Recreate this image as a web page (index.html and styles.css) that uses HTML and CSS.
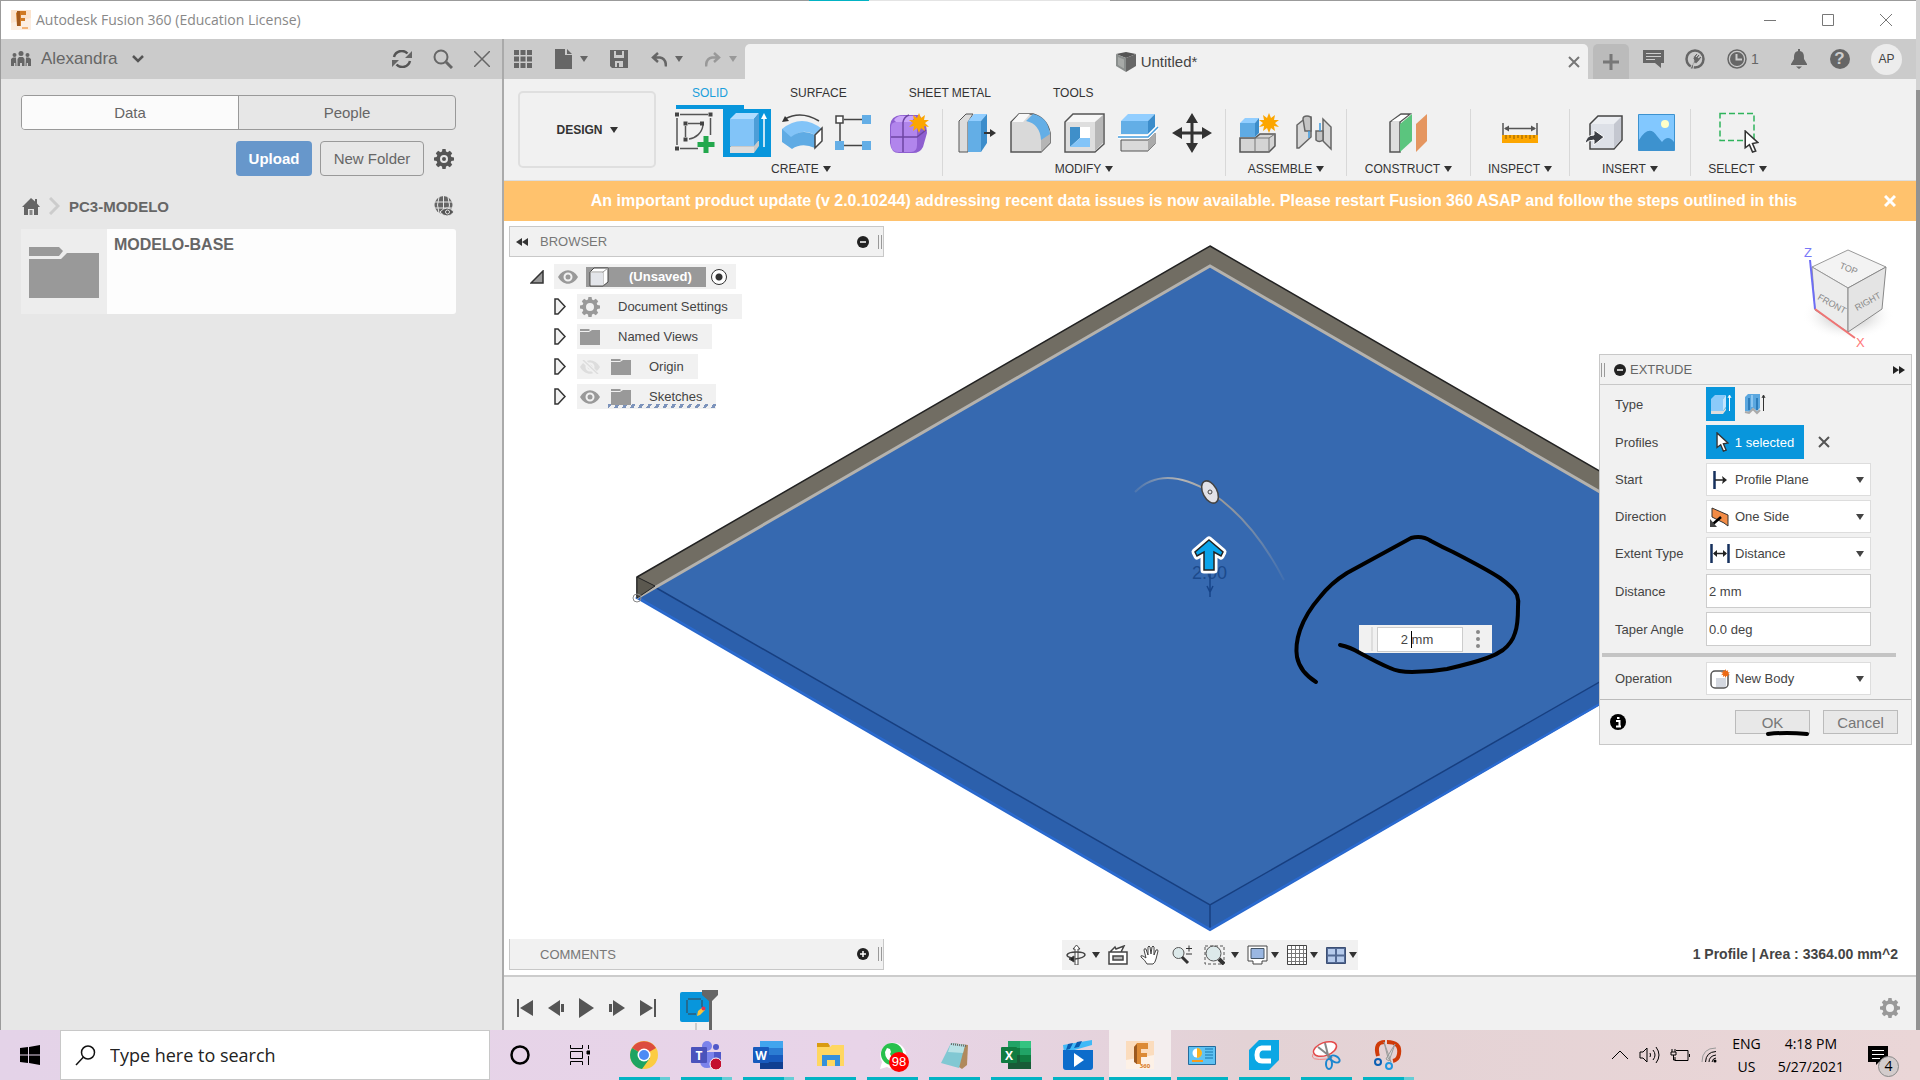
FILE: index.html
```html
<!DOCTYPE html>
<html lang="en">
<head>
    <meta charset="UTF-8">
    <meta name="viewport" content="width=device-width, initial-scale=1.0">
    <title>Autodesk Fusion 360 (Education License)</title>
    <link rel="stylesheet" href="styles.css">
</head>
<body>
    <!-- Shared icons -->
    <svg class="sprite" aria-hidden="true">
        <symbol id="caret" viewBox="0 0 8 6"><path d="M0 0h8L4 6z"/></symbol>
        <symbol id="gear" viewBox="0 0 20 20">
            <path fill-rule="evenodd" d="M8.4 0h3.2l.4 2.6 1.6.7L15.800 1.800l2.400 2.400-1.500 2.200.7 1.600 2.600.4v3.200l-2.600.4-.7 1.600 1.500 2.200-2.400 2.400-2.200-1.500-1.600.7-.4 2.600H8.400l-.4-2.600-1.600-.7-2.200 1.500-2.400-2.400 1.500-2.200-.7-1.600L0 11.600V8.400L2.600 8l.7-1.600-1.500-2.200 2.400-2.400 2.200 1.500L8 2.600zM10 6a4 4 0 1 0 0 8 4 4 0 0 0 0-8z"/>
        </symbol>
        <symbol id="folder" viewBox="0 0 20 16"><path d="M0 0h9l1 1-1 1H0zM0 3h9l3-2h8v15H0z"/></symbol>
        <symbol id="eye" viewBox="0 0 20 14">
            <path fill-rule="evenodd" d="M0 7C5-2 15-2 20 7 15 16 5 16 0 7zM10 2.500a4.500 4.500 0 1 0 0 9 4.500 4.500 0 0 0 0-9z"/><circle cx="10" cy="7" r="2.500"/>
        </symbol>
        <symbol id="expand" viewBox="0 0 12 17"><path d="M1 1h3l7 7.500-7 7.500H1z" fill="#f1f1f1" stroke="#333" stroke-width="1.500"/></symbol>
        <symbol id="pointer" viewBox="0 0 14 22"><path d="M1 1v16l4-3 3 7 3-1-3-7 5-1z" fill="#fff" stroke="#333" stroke-width="1.500"/></symbol>
        <symbol id="star" viewBox="0 0 20 20"><path d="M10 0l2 5 4-3-1 5 5 0-4 3 4 4-5-1 1 5-4-3-2 5-2-5-4 3 1-5-5 1 4-4-4-3 5 0-1-5 4 3z"/></symbol>
    </svg>

    <div class="window">
        <header class="titlebar">
            <svg class="logo" viewBox="0 0 20 20"><rect width="20" height="20" fill="#fbe3cd"/><path d="M0 13l20-5v12H0z" fill="#fceee2"/><path d="M5 3l2-2h8v4h-5v3h4v3h-4v5H6z" fill="#d07a24"/><path d="M6 1h3v15H6z" fill="#a2591c"/><path d="M11 17h6v2h-6z" fill="#f3b478"/></svg>
            <span>Autodesk Fusion 360 (Education License)</span>
            <div class="window-buttons">
                <button aria-label="Minimize"><svg viewBox="0 0 12 12"><path d="M0 6.500h12"/></svg></button>
                <button aria-label="Maximize"><svg viewBox="0 0 12 12"><path d="M.5.5h11v11H.5z"/></svg></button>
                <button aria-label="Close"><svg viewBox="0 0 12 12"><path d="M0 0l12 12M12 0L0 12"/></svg></button>
            </div>
        </header>

        <div class="workspace">
            <!-- Data panel -->
            <aside class="data-panel">
                <div class="data-header">
                    <button class="team">
                        <svg width="20" height="16" viewBox="0 0 20 16"><circle cx="10" cy="2.500" r="2.500"/><circle cx="3.500" cy="4" r="2"/><circle cx="16.500" cy="4" r="2"/><path d="M6.500 15V8l1.500-2h4l1.500 2v7h-2.500v-3H9v3zM0 15V8l2-1.500h3L5.500 15H4.400v-3H3v3zM20 15V8l-2-1.500h-3l-.5 8.500h1.100v-3H17v3z"/></svg>
                        Alexandra
                        <svg width="12" height="8" viewBox="0 0 12 8"><path d="M1 1l5 5 5-5" fill="none" stroke="#555" stroke-width="2.500"/></svg>
                    </button>
                    <button aria-label="Refresh"><svg width="20" height="18" viewBox="0 0 20 18"><path d="M2 7a8 8 0 0 1 13.500-3.500M18 11a8 8 0 0 1-13.500 3.500" fill="none" stroke="#555" stroke-width="2.500"/><path d="M20 1v7h-7zM0 17v-7h7z"/></svg></button>
                    <button aria-label="Search"><svg width="20" height="20" viewBox="0 0 20 20" fill="none" stroke="#666"><circle cx="8" cy="8" r="6.500" stroke-width="2"/><path d="M13 13l6 6" stroke-width="3"/></svg></button>
                    <button aria-label="Close panel"><svg width="16" height="16" viewBox="0 0 16 16"><path d="M0 0l16 16M16 0L0 16" stroke="#666" stroke-width="1.500"/></svg></button>
                </div>
                <div class="data-body">
                    <div class="segments">
                        <button class="active">Data</button>
                        <button>People</button>
                    </div>
                    <div class="data-actions">
                        <button class="upload">Upload</button>
                        <button class="new-folder">New Folder</button>
                        <button aria-label="Settings"><svg width="20" height="20" fill="#555"><use href="#gear"/><circle cx="10" cy="10" r="2"/></svg></button>
                    </div>
                    <nav class="crumbs">
                        <a href="#" aria-label="Home"><svg width="18" height="17" viewBox="0 0 18 17"><path d="M9 0l4 3.500V1h2v4.500l3 3.500h-2v8h-4v-6H6v6H2V9H0z"/><path d="M7.500 12h3v5h-3z" fill="#888"/></svg></a>
                        <svg width="11" height="18" viewBox="0 0 11 18"><path d="M1 1l8 8-8 8" fill="none" stroke="#ccc" stroke-width="3"/></svg>
                        <a href="#">PC3-MODELO</a>
                        <button aria-label="Public link"><svg width="20" height="20" viewBox="0 0 20 20"><circle cx="9.500" cy="9" r="9"/><path d="M9.500 0v18M0 6h19M0 12h19M5 1Q2 9 5 17M14 1q3 8 0 16" fill="none" stroke="#e7e7e7"/><path d="M6 16Q13 8 20 16 13 24 6 16z" fill="#555" stroke="#e7e7e7"/><circle cx="13.500" cy="16" r="2" fill="none" stroke="#e7e7e7"/></svg></button>
                    </nav>
                    <a class="folder-card" href="#">
                        <span class="thumb"><svg width="70" height="52" viewBox="0 0 70 52"><path d="M0 1h30l4 4-4 5H0zM0 13h32l6-6h32v45H0z"/></svg></span>
                        <span class="name">MODELO-BASE</span>
                    </a>
                </div>
            </aside>

            <main class="editor">
                <div class="appbar">
                    <div class="quick">
                        <button aria-label="Show data panel"><svg width="18" height="18" viewBox="0 0 18 18"><path d="M0 0h5v5H0zM6.500 0h5v5h-5zM13 0h5v5h-5zM0 6.500h5v5H0zM6.500 6.500h5v5h-5zM13 6.500h5v5h-5zM0 13h5v5H0zM6.500 13h5v5h-5zM13 13h5v5h-5z"/></svg></button>
                        <button aria-label="File"><svg width="17" height="20" viewBox="0 0 17 20"><path d="M0 0h10v6h7v14H0zM12 0l5 5h-5z"/></svg><svg class="caret"><use href="#caret"/></svg></button>
                        <button aria-label="Save"><svg width="18" height="18" viewBox="0 0 18 18"><path fill-rule="evenodd" d="M0 0h18v18H2l-2-2zM4 1v7h10V1h-2v4H6V1zM5 11v6h2v-4h2v4h4v-6z"/></svg></button>
                        <button aria-label="Undo"><svg width="16" height="15" viewBox="0 0 16 15"><path d="M7 1L2 5.500 7 10M2 5.500h7q6 1 6 9" fill="none" stroke="#666" stroke-width="2.500"/></svg><svg class="caret"><use href="#caret"/></svg></button>
                        <button class="muted" aria-label="Redo"><svg width="16" height="15" viewBox="0 0 16 15"><path d="M9 1l5 4.500L9 10M14 5.500H7q-6 1-6 9" fill="none" stroke="#999" stroke-width="2.500"/></svg><svg class="caret"><use href="#caret"/></svg></button>
                    </div>
                    <div class="doc-tab">
                        <span class="doc-title">
                            <svg width="20" height="20" viewBox="0 0 20 20"><path d="M0 2l10-2 10 2-10 4z" fill="#555"/><path d="M0 2l10 4v14L0 14z" fill="#8b8f8e"/><path d="M2 5l6 2.500v9L2 13z" fill="#a7aaa8"/><path d="M20 2L10 6v14l10-6z" fill="#666"/></svg>
                            Untitled*
                        </span>
                        <button aria-label="Close tab"><svg width="12" height="12" viewBox="0 0 12 12"><path d="M1 1l10 10M11 1L1 11" stroke="#777" stroke-width="2"/></svg></button>
                    </div>
                    <button class="new-tab" aria-label="New tab"><svg width="16" height="16" viewBox="0 0 16 16"><path d="M8 0v16M0 8h16" stroke="#777" stroke-width="3"/></svg></button>
                    <div class="account">
                        <button aria-label="Comments"><svg width="21" height="18" viewBox="0 0 21 18"><path d="M0 0h21v13h-3v5l-6-5H0z"/><path d="M3 3.500h15M3 6.500h15M3 9.500h9" stroke="#ccc"/></svg></button>
                        <button aria-label="Extensions"><svg width="20" height="20" viewBox="0 0 20 20"><circle cx="10" cy="10" r="8.500" fill="none" stroke="#666" stroke-width="2.500"/><path d="M5 20l4-8q-2-3 0-5l3-3 1 1-2 3 3-3 1 1-2 3 3-2 1 1-3 4q-3 4-5 2l-1 6z" stroke="#cbcbcb" stroke-width="1"/></svg></button>
                        <button class="jobs"><svg width="20" height="20" viewBox="0 0 20 20"><circle cx="10" cy="10" r="9" fill="none" stroke="#666" stroke-width="1.500"/><circle cx="10" cy="10" r="7"/><path d="M9.500 5v5.500H15" fill="none" stroke="#ccc" stroke-width="2"/></svg>1</button>
                        <button aria-label="Notifications"><svg width="18" height="20" viewBox="0 0 18 20"><path d="M8 0h2v2c4 1 4 4 4 8l3 5v1H1v-1l3-5c0-4 0-7 4-8zM6 17.500h6L9 20z"/></svg></button>
                        <button class="help" aria-label="Help">?</button>
                        <button class="avatar">AP</button>
                    </div>
                </div>

                <div class="ribbon">
                    <button class="workspace-switch">DESIGN <svg class="caret"><use href="#caret"/></svg></button>
                    <div class="ribbon-main">
                        <nav class="ribbon-tabs">
                            <a class="active" href="#">SOLID</a>
                            <a href="#">SURFACE</a>
                            <a href="#">SHEET METAL</a>
                            <a href="#">TOOLS</a>
                        </nav>
                        <div class="ribbon-groups">
                            <section>
                                <div class="tools">
                                    <button aria-label="Create Sketch"><svg viewBox="0 0 48 48"><path d="M11 5.500h28M8 9v27M41.500 9v17M11 39.500h18M19 14.500h12M16.500 17v11M34 16c-1 8-7 13-14 14" fill="none" stroke="#555" stroke-width="1.500"/><path d="M6 3.500h4v4H6zM39.500 3.500h4v4h-4zM6 37.500h4v4H6zM14.500 12.500h4v4h-4zM31 12.500h4v4h-4zM14.500 28.500h4v4h-4z" fill="#444"/><path d="M34.500 27h5v6h6v5h-6v6h-5v-6h-6v-5h6z" fill="#23a84d"/></svg></button>
                                    <button class="active" aria-label="Extrude"><svg viewBox="0 0 48 48"><path d="M7 38l6-6h23v5l-5 7H7z" fill="#c9c9c9"/><path d="M7 38h24v6H7z" fill="#dedede"/><path d="M7 10l6-6h23l-5 6z" fill="#b0dcff"/><path d="M7 10h24v27H7z" fill="#82c4f8"/><path d="M31 10l5-6v27l-5 6z" fill="#4d9ed8"/><path d="M41 38V9" stroke="#fff" stroke-width="1.500"/><path d="M38 10l3-6 3 6z" fill="#fff"/></svg></button>
                                    <button aria-label="Revolve"><svg viewBox="0 0 48 48"><path d="M5 20Q25 4 45 20l-7 6Q25 18 14 29l-9-5z" fill="#82c4f8"/><path d="M5 20l9 8Q25 19 38 26v13q-13-6-23 1L5 33z" fill="#5fabe4"/><path d="M38 26l7-7v13l-7 7z" fill="#fff" stroke="#444" stroke-width="1.500"/><path d="M8 10Q24 1 42 12" fill="none" stroke="#444" stroke-width="1.500"/><path d="M5 13l3-6 4 5z" fill="#333"/></svg></button>
                                    <button aria-label="Rectangular Pattern"><svg viewBox="0 0 48 48"><path d="M13 10.500h18M9 14v18M13 36.500h18" stroke="#444" stroke-width="1.500"/><path d="M5 7h7v7H5z" fill="#fff" stroke="#444" stroke-width="1.500"/><path d="M31 6h9v9h-9zM4 32h9v9H4zM31 32h9v9h-9z" fill="#64aee6"/></svg></button>
                                    <button aria-label="Create Form"><svg viewBox="0 0 48 48"><path d="M5 16Q6 7 16 6h18q8 8 8 18l-4 14q-3 6-10 6H14q-8 0-9-10z" fill="#8e5fd0"/><path d="M6 18Q6 13 12 13h15q5 0 5 6v17q0 7-6 7H13q-7 0-7-8z" fill="#b185ec"/><path d="M9 11q4-5 10-4h12l-5 6H11z" fill="#cba6f9"/><path d="M6 28h26l9-7M18 13v30M18 13q1-5 6-7" fill="none" stroke="#6d45a3" stroke-width="1.500"/><use href="#star" x="24" y="4" width="20" height="20" fill="#fca600"/></svg></button>
                                </div>
                                <button class="menu">CREATE <svg class="caret"><use href="#caret"/></svg></button>
                            </section>
                            <section>
                                <div class="tools">
                                    <button aria-label="Press Pull"><svg viewBox="0 0 48 48"><path d="M7 12l7-7h7l-5 8v30H7z" fill="#dcdcdc" stroke="#555"/><path d="M16 12l6-7h13l-6 7z" fill="#92ceff"/><path d="M16 12h13v31H16z" fill="#63aee6"/><path d="M29 12l6-7v29l-6 9z" fill="#3c8dcb"/><path d="M32 24h8" stroke="#333" stroke-width="2"/><path d="M38 20l6 4-6 4z" fill="#333"/></svg></button>
                                    <button aria-label="Fillet"><svg viewBox="0 0 48 48"><path d="M5 43V13l8-8h14q14 4 17 19v10l-9 9z" fill="#d9d9d9" stroke="#555" stroke-width="1.500"/><path d="M13 5h11l-7 8H6z" fill="#f8f8f8"/><path d="M35 29l9-8v13l-9 9z" fill="#b5b5b5"/><path d="M20 12l7-7q15 3 17 20l-9 6q-1-16-15-19z" fill="#63aee6"/></svg></button>
                                    <button aria-label="Shell"><svg viewBox="0 0 48 48"><path d="M5 13l8-8h31v30l-9 8H5z" fill="#f7f7f7" stroke="#555" stroke-width="1.500"/><path d="M6 13h29v29H6z" fill="#dedede"/><path d="M35 13l8-7v28l-8 8z" fill="#b7b7b7"/><path d="M10 18h20v20H10z" fill="#fff"/><path d="M10 18h10v11L10 38z" fill="#3f8fc9"/><path d="M20 29h10v9H10z" fill="#82c4f8"/></svg></button>
                                    <button aria-label="Split Body"><svg viewBox="0 0 48 48"><path d="M7 12l7-7h27l-7 7z" fill="#92ceff"/><path d="M7 12h27v13H7z" fill="#63aee6"/><path d="M34 12l7-7v13l-7 7z" fill="#3c8dcb"/><path d="M7 31h27l7-7v11l-7 7H7z" fill="#d9d9d9" stroke="#555"/><path d="M34 31l7-7v11l-7 7z" fill="#aaa"/><path d="M4 28h30l10-10" fill="none" stroke="#fff" stroke-width="4"/><path d="M4 28h30l10-10" fill="none" stroke="#479ddd" stroke-width="1.500"/></svg></button>
                                    <button aria-label="Move/Copy"><svg viewBox="0 0 48 48"><path d="M24 12v24M12 24h24" stroke="#333" stroke-width="3"/><path d="M24 4l6 10H18zM24 44l6-10H18zM4 24l10-6v12zM44 24l-10-6v12z" fill="#333"/></svg></button>
                                </div>
                                <button class="menu">MODIFY <svg class="caret"><use href="#caret"/></svg></button>
                            </section>
                            <section>
                                <div class="tools">
                                    <button aria-label="New Component"><svg viewBox="0 0 48 48"><path d="M5 29h15l5-4h15v12l-6 6H5z" fill="#d4d4d4" stroke="#555" stroke-width="1.500"/><path d="M20 29h14l6-4M20 29v14M34 29v14" fill="none" stroke="#777"/><path d="M5 14l5-5h14l-4 5z" fill="#92ceff"/><path d="M5 14h15v14H5z" fill="#5fabe4"/><path d="M20 14l4-5v15l-4 4z" fill="#3c8dcb"/><use href="#star" x="24" y="4" width="20" height="20" fill="#fca600"/></svg></button>
                                    <button aria-label="Joint"><svg viewBox="0 0 48 48" stroke="#666" stroke-width="1.500"><path d="M8 16l10-8h4v20L10 39H8z" fill="#d7d7d7"/><path d="M14 10q0-3 4-3t4 3v12h-6z" fill="#c4c4c4"/><path d="M42 40V18l-8-8v22z" fill="#d7d7d7"/><path d="M27 22h7v9q-4 3-7 0z" fill="#c4c4c4"/><path d="M20 22v7M31 14v8" stroke="#3e9be0"/></svg></button>
                                </div>
                                <button class="menu">ASSEMBLE <svg class="caret"><use href="#caret"/></svg></button>
                            </section>
                            <section class="wide">
                                <div class="tools">
                                    <button aria-label="Offset Plane"><svg viewBox="0 0 48 48"><path d="M5 13l11-8h9L15 13v30H5z" fill="#dedede" stroke="#555" stroke-width="1.500"/><path d="M7 12l9-6h7l-8 6z" fill="#fff"/><path d="M15 15l12-10v27L15 43z" fill="#5bc57e"/><path d="M31 15L42 5v27L31 43z" fill="#e59660"/></svg></button>
                                </div>
                                <button class="menu">CONSTRUCT <svg class="caret"><use href="#caret"/></svg></button>
                            </section>
                            <section class="middle">
                                <div class="tools">
                                    <button aria-label="Measure"><svg viewBox="0 0 48 48"><path d="M7 14v12M41 14v12M9 19.500h30" stroke="#555" stroke-width="1.500"/><path d="M8 19.500l5-3v6zM40 19.500l-5-3v6z" fill="#555"/><path d="M6 26h36v8H6z" fill="#fca600"/><path d="M10 26v4M14 26v3M18 26v4M22 26v3M26 26v4M30 26v3M34 26v4M38 26v3" stroke="#8f5d00"/></svg></button>
                                </div>
                                <button class="menu">INSPECT <svg class="caret"><use href="#caret"/></svg></button>
                            </section>
                            <section>
                                <div class="tools">
                                    <button aria-label="Insert Derive"><svg viewBox="0 0 48 48"><path d="M11 15l8-8h24v24l-8 9H11z" fill="#eceef2" stroke="#444" stroke-width="1.500"/><path d="M12 15h23v24H12z" fill="#dde0e7"/><path d="M35 15l7-7v23l-7 8z" fill="#c4c7d0"/><path d="M6 35q1-9 9-9v-5l10 7-10 8v-5q-6 0-9 4z" fill="#3d3f45" stroke="#fff"/></svg></button>
                                    <button aria-label="Insert Image"><svg viewBox="0 0 48 48"><path d="M5.500 5.500h36v36h-36z" fill="#82c8ff" stroke="#3d92cf"/><circle cx="32" cy="15" r="4" fill="#ffffc8"/><path d="M6 31q10-16 18-4l5 6q6-8 12 0v8H6z" fill="#3d92cf"/></svg></button>
                                </div>
                                <button class="menu">INSERT <svg class="caret"><use href="#caret"/></svg></button>
                            </section>
                            <section class="narrow">
                                <div class="tools">
                                    <button aria-label="Select"><svg viewBox="0 0 48 48"><path d="M6 4.500h34v27H6z" fill="none" stroke="#2fb45c" stroke-width="1.500" stroke-dasharray="6 3"/><use href="#pointer" x="30" y="21" width="15" height="23"/></svg></button>
                                </div>
                                <button class="menu">SELECT <svg class="caret"><use href="#caret"/></svg></button>
                            </section>
                        </div>
                    </div>
                </div>

                <div class="banner">
                    <p>An important product update (v 2.0.10244) addressing recent data issues is now available. Please restart Fusion 360 ASAP and follow the steps outlined in this</p>
                    <button aria-label="Dismiss"><svg width="12" height="12" viewBox="0 0 12 12"><path d="M1 1l10 10M11 1L1 11" stroke="#fff" stroke-width="3"/></svg></button>
                </div>

                <div class="canvas">
                    <!-- Model -->
                    <svg class="scene" viewBox="504 221 1412 754">
                        <defs>
                            <linearGradient id="arc" x1="0" x2="1"><stop offset="0" stop-color="#aaa" stop-opacity=".2"/><stop offset=".3" stop-color="#b5b5b5"/><stop offset=".6" stop-color="#999"/><stop offset="1" stop-color="#aaa" stop-opacity=".1"/></linearGradient>
                            <radialGradient id="shade"><stop offset="0" stop-color="#777" stop-opacity=".8"/><stop offset="1" stop-color="#fff" stop-opacity="0"/></radialGradient>
                        </defs>
                        <path d="M1210 246l573 331v21L1210 266 637 598v-21z" fill="#716d63" stroke="#222" stroke-width="1.500"/>
                        <path d="M1210 266l573 332-573 332L637 598z" fill="#3669b0" stroke="#2a6ad0" stroke-width="2"/>
                        <path d="M637 598l16-12 557 319 573-328v21l-573 332z" fill="#2c60ac"/>
                        <path d="M653 586l557 319 573-328M1210 905v25" fill="none" stroke="#173f80" stroke-width="1.500"/>
                        <path d="M637 598l573-332 573 332" fill="none" stroke="#b5b2ac" stroke-width="3"/>
                        <path d="M639 598l571 331 573-331" fill="none" stroke="#2a6ad0" stroke-width="2"/>
                        <path d="M637 577l18 9-18 12z" fill="#5b584f" stroke="#222"/>
                        <circle cx="637" cy="598" r="4" fill="none" stroke="#888"/>

                        <path d="M1135 492q28-28 75 0 43 28 74 88" fill="none" stroke="url(#arc)" stroke-width="2"/>
                        <ellipse cx="1210" cy="492" rx="7" ry="12" transform="rotate(-28 1210 492)" fill="#e2e2e8" stroke="#444" stroke-width="1.500"/>
                        <circle cx="1210" cy="492" r="2" fill="none" stroke="#444"/>
                        <text x="1192" y="579" class="dim-text">2.00</text>
                        <path d="M1210 572v25M1207 586l3 6 3-6" stroke="#174488" stroke-width="1.500" fill="none"/>
                        <path d="M1209 540l14 12-2 4-7-4v18h-10v-18l-7 4-2-4z" fill="#0ba4ea" stroke="#fff" stroke-width="7" stroke-linejoin="round"/>
                        <path d="M1209 540l14 12-2 4-7-4v18h-10v-18l-7 4-2-4z" fill="#0ba4ea" stroke="#222" stroke-width="1.500"/>

                        <!-- View cube -->
                        <ellipse cx="1848" cy="315" rx="46" ry="25" fill="url(#shade)"/>
                        <path d="M1812 267l36-17 38 17-38 21z" fill="#f3f3f3" stroke="#999"/>
                        <path d="M1812 267l36 21v44l-33-22z" fill="#ececec" stroke="#999"/>
                        <path d="M1886 267l-38 21v44l34-23z" fill="#e4e4e4" stroke="#888"/>
                        <path d="M1815 309l-5-49" stroke="#6d6df5" stroke-width="2"/>
                        <path d="M1815 309l40 29" stroke="#ef7474" stroke-width="2"/>
                        <text x="1839" y="268" transform="rotate(22 1839 268)" class="cube-text">TOP</text>
                        <text x="1817" y="299" transform="rotate(29 1817 299)" class="cube-text">FRONT</text>
                        <text x="1857" y="311" transform="rotate(-29 1857 311)" class="cube-text">RIGHT</text>
                        <text x="1804" y="257" class="axis-z">Z</text>
                        <text x="1856" y="347" class="axis-x">X</text>
                    </svg>

                    <div class="dock browser-head">
                        <svg width="12" height="8" viewBox="0 0 12 8"><path d="M6 0v8L0 4zM12 0v8L6 4z"/></svg>
                        <h2>BROWSER</h2>
                        <button class="dot" aria-label="Collapse browser"><svg viewBox="0 0 12 12"><circle cx="6" cy="6" r="6"/><path d="M3 6h6" stroke="#fff" stroke-width="1.500"/></svg></button>
                        <span class="grip"></span>
                    </div>

                    <ul class="tree">
                        <li class="root">
                            <svg width="14" height="14" viewBox="0 0 14 14"><path d="M13 1v12H1z" fill="#999" stroke="#333" stroke-width="1.500"/></svg>
                            <div class="node">
                                <svg class="eye"><use href="#eye"/></svg>
                                <span class="selected"><svg width="20" height="20" viewBox="0 0 20 20"><path d="M1 5l4-4h14v14l-5 4H1z" fill="#fff" stroke="#444"/><path d="M1 5h13v14M14 5l5-4" fill="none" stroke="#999"/><path d="M2 6h12v12H2z" fill="#e3e5ea"/></svg>(Unsaved)</span>
                                <input type="radio" name="activate" aria-label="Activate component" checked>
                            </div>
                        </li>
                        <li><svg class="expand"><use href="#expand"/></svg><div class="node"><svg class="ico gear"><use href="#gear"/></svg>Document Settings</div></li>
                        <li><svg class="expand"><use href="#expand"/></svg><div class="node"><svg class="ico"><use href="#folder"/></svg>Named Views</div></li>
                        <li><svg class="expand"><use href="#expand"/></svg><div class="node"><svg class="eye off" viewBox="0 0 20 14"><use href="#eye"/><path d="M3 0l14 14" stroke="#f1f1f1" stroke-width="4"/><path d="M3 0l15 14" stroke="#ddd" stroke-width="1.500"/></svg><svg class="ico"><use href="#folder"/></svg>Origin</div></li>
                        <li><svg class="expand"><use href="#expand"/></svg><div class="node sketches"><svg class="eye"><use href="#eye"/></svg><svg class="ico"><use href="#folder"/></svg>Sketches</div></li>
                    </ul>

                    <div class="float-input">
                        <span class="handle"></span>
                        <div class="field"><input type="text" value="2 mm" aria-label="Distance value"><span class="cursor"></span></div>
                        <button aria-label="More options"><svg width="4" height="18" viewBox="0 0 4 18"><circle cx="2" cy="2" r="2"/><circle cx="2" cy="9" r="2"/><circle cx="2" cy="16" r="2"/></svg></button>
                    </div>

                    <form class="extrude">
                        <div class="extrude-head">
                            <span class="grip"></span>
                            <button type="button" class="dot" aria-label="Collapse"><svg viewBox="0 0 12 12"><circle cx="6" cy="6" r="6"/><path d="M3 6h6" stroke="#fff" stroke-width="1.500"/></svg></button>
                            <h2>EXTRUDE</h2>
                            <svg width="12" height="8" viewBox="0 0 12 8"><path d="M0 0v8l6-4zM6 0v8l6-4z"/></svg>
                        </div>
                        <div class="extrude-body">
                            <div class="row">
                                <span>Type</span>
                                <div class="types">
                                    <button type="button" class="on" aria-label="Extrude"><svg width="22" height="22" viewBox="0 0 22 22"><path d="M1 6l4-4h11l-3 4v13H1z" fill="#8bcaf9"/><path d="M13 6l3-4v12l-3 4z" fill="#c4e4fc"/><path d="M1 18h12l3-3v2l-3 4H1z" fill="#ddd"/><path d="M19.500 18V3M18 5l1.500-3L21 5" stroke="#fff" fill="none"/></svg></button>
                                    <button type="button" aria-label="Thin Extrude"><svg width="22" height="22" viewBox="0 0 22 22"><path d="M1 4l3-3h12v14l-3 3-4-3-3 4-5-1z" fill="#5ba7df"/><path d="M5 5v12M13 5v12" stroke="#2d7dbb" stroke-width="2"/><path d="M8 2v12" stroke="#8cc6f0" stroke-width="2"/><path d="M1 19l4 1 4-4 4 4 3-3" fill="none" stroke="#aaa" stroke-width="2"/><path d="M19.500 18V3M18 5l1.500-3L21 5" stroke="#333" fill="none"/></svg></button>
                                </div>
                            </div>
                            <div class="row">
                                <span>Profiles</span>
                                <div class="types">
                                    <button type="button" class="on picked"><svg width="13" height="20"><use href="#pointer"/></svg>1 selected</button>
                                    <button type="button" class="clear" aria-label="Clear selection"><svg width="12" height="12" viewBox="0 0 12 12"><path d="M1 1l10 10M11 1L1 11" stroke="#555" stroke-width="2"/></svg></button>
                                </div>
                            </div>
                            <div class="row">
                                <label for="start">Start</label>
                                <div class="pick"><svg width="20" height="20" viewBox="0 0 20 20"><path d="M4.500 1v18" stroke="#16315e" stroke-width="2.500"/><path d="M5 10h9" stroke="#222" stroke-width="1.500"/><path d="M12 6l5 4-5 4 1-4z" fill="#222"/></svg><select id="start"><option>Profile Plane</option></select><svg class="caret"><use href="#caret"/></svg></div>
                            </div>
                            <div class="row">
                                <label for="direction">Direction</label>
                                <div class="pick"><svg width="20" height="20" viewBox="0 0 20 20"><path d="M2 1l16 7v11l-4-3-12-6z" fill="#f28b45" stroke="#333"/><path d="M3 17l8-7" stroke="#000" stroke-width="2.500"/><path d="M0 12v8h7z"/></svg><select id="direction"><option>One Side</option></select><svg class="caret"><use href="#caret"/></svg></div>
                            </div>
                            <div class="row">
                                <label for="extent">Extent Type</label>
                                <div class="pick"><svg width="20" height="20" viewBox="0 0 20 20"><path d="M1.500 0v19M18.500 0v19" stroke="#16315e" stroke-width="2.500"/><path d="M4 9.500h12" stroke="#222" stroke-width="1.500"/><path d="M3 9.500L7 6v7zM17 9.500L13 6v7z" fill="#222"/></svg><select id="extent"><option>Distance</option></select><svg class="caret"><use href="#caret"/></svg></div>
                            </div>
                            <div class="row">
                                <label for="distance">Distance</label>
                                <input id="distance" type="text" value="2 mm">
                            </div>
                            <div class="row">
                                <label for="taper">Taper Angle</label>
                                <input id="taper" type="text" value="0.0 deg">
                            </div>
                            <hr>
                            <div class="row">
                                <label for="operation">Operation</label>
                                <div class="pick"><svg width="20" height="20" viewBox="0 0 20 20"><rect x="1" y="2" width="17" height="17" rx="4" fill="#fff" stroke="#555" stroke-width="1.500"/><path d="M6 9h10v9H6z" fill="#d4d8e0"/><use href="#star" x="11" y="0" width="9" height="9" fill="#ee6a14"/></svg><select id="operation"><option>New Body</option></select><svg class="caret"><use href="#caret"/></svg></div>
                            </div>
                        </div>
                        <div class="extrude-foot">
                            <svg width="16" height="16" viewBox="0 0 16 16"><circle cx="8" cy="8" r="8"/><path d="M6 7h3.500v5M6 12.500h5M7 4h2.500" fill="none" stroke="#fff" stroke-width="2"/></svg>
                            <button type="button">OK</button>
                            <button type="button">Cancel</button>
                        </div>
                    </form>

                    <!-- Pen annotations -->
                    <svg class="ink" viewBox="504 221 1412 754" fill="none"><path d="M1316 682Q1300 672 1297 657 1295 645 1300 630 1306 613 1320 597 1331 583 1347 573L1411 538Q1422 535 1431 541 1442 547 1453 552 1488 570 1500 578 1514 588 1517 595 1519 601 1518 607 1518 625 1515 633 1512 643 1503 650 1496 655 1487 658 1473 663 1447 669 1430 672 1412 672 1398 672 1390 668 1380 664 1360 653 1350 647 1340 645"/><path d="M1768 734q18-2 39 0"/></svg>

                    <div class="dock comments">
                        <h2>COMMENTS</h2>
                        <button class="dot" aria-label="Expand comments"><svg viewBox="0 0 12 12"><circle cx="6" cy="6" r="6"/><path d="M3 6h6M6 3v6" stroke="#fff" stroke-width="1.500"/></svg></button>
                        <span class="grip"></span>
                    </div>

                    <div class="nav-bar">
                        <button aria-label="Orbit"><svg width="20" height="20" viewBox="0 0 20 20" fill="none" stroke="#444"><path d="M9 20V4H7l3.500-4L14 4h-2v16z" fill="#fff"/><path d="M6 13Q1 12 1 10q1-3 9.500-3T19 10q-1 3-10 4" stroke-width="1.500"/><path d="M3 14l5-3v6z" fill="#222"/></svg><svg class="caret"><use href="#caret"/></svg></button>
                        <button class="single" aria-label="Look At"><svg width="20" height="20" viewBox="0 0 20 20" fill="#fff" stroke="#444" stroke-width="1.500"><path d="M2 7l5-5 1 2 8-3-3 6zM1 7h18v12H1z"/><path d="M5 11h10v4H5z" fill="#bbb"/></svg></button>
                        <button class="single" aria-label="Pan"><svg width="20" height="20" viewBox="0 0 20 20"><path d="M7 19q-2-4-6-7-1-2 2-1l3 2-2-8q0-2 2-1l2 6V2q1-2 2 0l1 7 1-7q1-2 2 0v8l2-5q2-1 2 1l-2 8q-1 4-3 5z" fill="#fff" stroke="#444"/></svg></button>
                        <button class="single" aria-label="Zoom"><svg width="20" height="20" viewBox="0 0 20 20"><circle cx="6.500" cy="8" r="5.500" fill="#dce9ea" stroke="#555"/><path d="M10 12l6 6" stroke="#333" stroke-width="3"/><path d="M14 3.500h6M17 .5v6M14 9h6" stroke="#333"/></svg></button>
                        <button aria-label="Fit"><svg width="21" height="20" viewBox="0 0 21 20"><path d="M1 1h19v18H1z" fill="none" stroke="#555" stroke-dasharray="3 2"/><circle cx="9.500" cy="8.500" r="7.500" fill="#dce9ea" stroke="#555"/><path d="M15 14l5 5" stroke="#333" stroke-width="4"/></svg><svg class="caret"><use href="#caret"/></svg></button>
                        <button aria-label="Display Settings"><svg width="21" height="20" viewBox="0 0 21 20" fill="#fff" stroke="#444"><path d="M1 1h19v15h-5v3H6v-3H1z"/><path d="M4 3.500h13v10H4z" fill="#9ab7e2" stroke="#456"/></svg><svg class="caret"><use href="#caret"/></svg></button>
                        <button aria-label="Grid and Snaps"><svg width="20" height="20" viewBox="0 0 20 20"><path d="M.5.500h19v19H.5z" fill="#fff" stroke="#444"/><path d="M4.500 1v18M8.500 1v18M12.500 1v18M16.500 1v18M1 4.500h18M1 8.500h18M1 12.500h18M1 16.500h18" stroke="#777"/></svg><svg class="caret"><use href="#caret"/></svg></button>
                        <button aria-label="Viewports"><svg width="20" height="17" viewBox="0 0 20 17"><path d="M.5.5h19v16H.5z" fill="#536a94" stroke="#3c4f74"/><path d="M2 2h7v5.500H2zM11 2h7v5.500h-7zM2 9.500h7V15H2zM11 9.500h7V15h-7z" fill="#b6cbec"/></svg><svg class="caret"><use href="#caret"/></svg></button>
                    </div>

                    <p class="status">1 Profile | Area : 3364.00 mm^2</p>
                </div>

                <div class="timeline">
                    <button aria-label="Go to beginning"><svg width="16" height="18" viewBox="0 0 16 18"><path d="M0 0h2v18H0zM16 1v16L3 9z"/></svg></button>
                    <button aria-label="Step back"><svg width="16" height="18" viewBox="0 0 16 18"><path d="M12 1v16L0 9zM13 5h3v8h-3z"/></svg></button>
                    <button aria-label="Play"><svg width="15" height="20" viewBox="0 0 15 20"><path d="M0 0l15 10L0 20z"/></svg></button>
                    <button aria-label="Step forward"><svg width="16" height="18" viewBox="0 0 16 18"><path d="M4 1v16l12-8zM0 5h3v8H0z"/></svg></button>
                    <button aria-label="Go to end"><svg width="16" height="18" viewBox="0 0 16 18"><path d="M14 0h2v18h-2zM0 1v16l13-8z"/></svg></button>
                    <button class="feature" aria-label="Sketch1"><svg width="38" height="40" viewBox="0 0 38 40"><path d="M16 33v7" stroke="#ccc" stroke-width="2"/><rect y="2" width="30" height="30" rx="2" fill="#0896dc"/><path d="M8 9h13M7 10v13M22 10v7M8 24h8" stroke="#2c5d78" stroke-width="1.500"/><path d="M17 26l1-5 5-4 2 3-5 5z" fill="#f7c33c"/><circle cx="23.500" cy="18.500" r="2" fill="#e3344e"/><path d="M22 0h16v5l-6 6v29h-3V11l-7-6z" fill="#666"/></svg></button>
                    <button class="timeline-settings" aria-label="Timeline settings"><svg width="20" height="20" fill="#999"><use href="#gear"/></svg></button>
                </div>
            </main>
        </div>
    </div>

    <footer class="taskbar">
        <button class="start" aria-label="Start"><svg width="20" height="20" viewBox="0 0 20 20"><path d="M0 3l8-1v7.500H0zM9 2l11-2v9.500H9zM0 10.500h8V18l-8-1zM9 10.500h11V20L9 18z"/></svg></button>
        <label class="search">
            <svg width="21" height="21" viewBox="0 0 21 21" fill="none" stroke="#111" stroke-width="1.500"><circle cx="13" cy="7.500" r="6.500"/><path d="M8.500 12L1 20"/></svg>
            <input type="search" placeholder="Type here to search">
        </label>
        <button class="sys" aria-label="Cortana"><svg width="20" height="20" viewBox="0 0 20 20"><circle cx="10" cy="10" r="8.500" fill="none" stroke="#000" stroke-width="2.500"/></svg></button>
        <button class="sys" aria-label="Task View"><svg width="20" height="20" viewBox="0 0 20 20" fill="none" stroke="#000"><path d="M.5 0v3.500h12V0M.5 20v-3.500h12V20M.5 6.500h12v7H.5zM18.500 0v4M18.500 11v9"/><path d="M17 6h3v3h-3z" fill="#000"/></svg></button>
        <div class="apps">
            <button class="app stack" aria-label="Chrome"><svg viewBox="0 0 30 30"><circle cx="15" cy="15" r="14" fill="#fccc41"/><path d="M15 15L3 8a14 14 0 0 1 24 0z" fill="#dc4c3f"/><path d="M15 15L3 8a14 14 0 0 0 10 21l8-11z" fill="#1da462"/><circle cx="15" cy="15" r="6.500" fill="#fff"/><circle cx="15" cy="15" r="5" fill="#4c8bf5"/></svg></button>
            <button class="app stack" aria-label="Teams"><svg viewBox="0 0 30 30"><circle cx="16" cy="6" r="5" fill="#7b83eb"/><circle cx="25" cy="7" r="3" fill="#5059c9"/><path d="M22 12h8v9q-2 4-6 3z" fill="#5059c9"/><path d="M10 12h13v10q-1 6-7 6t-7-6z" fill="#7b83eb"/><rect y="7" width="16" height="16" rx="1" fill="#4b53bc"/><text x="8" y="20" class="glyph">T</text><circle cx="25" cy="24" r="6" fill="#c4102e" stroke="#fff"/></svg></button>
            <button class="app stack" aria-label="Word"><svg viewBox="0 0 30 30"><path d="M7 1h23v7H7z" fill="#41a5ee"/><path d="M7 8h23v7H7z" fill="#2b7cd3"/><path d="M7 15h23v7H7z" fill="#185abd"/><path d="M7 22h23v7H7z" fill="#103f91"/><rect y="7" width="16" height="16" rx="1" fill="#185abd"/><text x="8" y="20" class="glyph">W</text></svg></button>
            <button class="app" aria-label="File Explorer"><svg viewBox="0 0 30 30"><path d="M2 3h11l2 3-2 3H2z" fill="#d99b10"/><path d="M2 7h13l2-2h12v21H2z" fill="#ffd761"/><path d="M7 26V15h18v11h-5v-6h-8v6z" fill="#3590dc"/></svg></button>
            <button class="app" aria-label="WhatsApp"><svg viewBox="0 0 30 30"><path d="M3 29l2-7A13 13 0 1 1 10 27z" fill="#fff"/><circle cx="15" cy="14" r="11" fill="#28c04c"/><path d="M10 8l3 1 1 3-1 2q1 3 4 4l2-1 3 2q-2 4-6 3Q8 20 8 12z" fill="#fff"/></svg><span class="badge">98</span></button>
            <button class="app" aria-label="Notepad"><svg viewBox="0 0 30 30"><path d="M12 3l17 2-1 20-5 4-3-2z" fill="#b08a5d"/><path d="M12 3l14 2-6 23-18-5z" fill="#81c8d3"/><path d="M12 3l14 2-2 8-15-1z" fill="#b9e2e6"/><path d="M12 4l15 2" stroke="#666" stroke-width="2" stroke-dasharray="1 1"/></svg></button>
            <button class="app" aria-label="Excel"><svg viewBox="0 0 30 30"><path d="M7 1h12v7H7z" fill="#21a366"/><path d="M19 1h11v7H19z" fill="#33c481"/><path d="M7 8h12v7H7z" fill="#107c41"/><path d="M19 8h11v7H19z" fill="#21a366"/><path d="M7 15h12v14H7z" fill="#185c37"/><path d="M19 15h11v7H19z" fill="#107c41"/><path d="M19 22h11v7H19z" fill="#185c37"/><rect y="7" width="16" height="16" rx="1" fill="#107c41"/><text x="8" y="20" class="glyph">X</text></svg></button>
            <button class="app" aria-label="Movies"><svg viewBox="0 0 30 30"><path d="M0 5l29-5v5L1 13z" fill="#40b9f7"/><path d="M5 4l5-1-3 6-4 1zM14 2l5-1-3 6-5 1z" fill="#0c5cb0"/><path d="M0 10h30v17q0 3-3 3H3q-3 0-3-3z" fill="#0d6ccb"/><path d="M11 13l10 7-10 7z" fill="#fff"/></svg></button>
            <button class="app current" aria-label="Fusion 360"><svg viewBox="0 0 30 30"><path d="M1 1h28v28H1z" fill="#fbdcbd"/><path d="M1 20l28-5v14H1z" fill="#fdf1e6"/><path d="M9 7l3-4h11v6h-7v4h6v4h-6v7h-5z" fill="#dc8a35"/><path d="M9 7l3-3v20l-3-2z" fill="#9c5a20"/><text x="20" y="28" class="tiny">360</text></svg></button>
            <button class="app" aria-label="Remote"><svg viewBox="0 0 30 30"><path d="M1.500 6.500h27v18h-27z" fill="#5fc2f3" stroke="#246b9c"/><circle cx="10" cy="13" r="4.500" fill="#fff"/><path d="M10 13V8a5 5 0 0 1 0 10z" fill="#fbb321"/><path d="M18 9h8M18 12h8M18 15h8M18 18h8" stroke="#1876ae"/><path d="M5 21h11" stroke="#f59b1d" stroke-width="2"/></svg></button>
            <button class="app" aria-label="Cura"><svg viewBox="0 0 30 30"><path d="M10 0h20v20L20 30H0V10z" fill="#0ba7e4"/><path d="M22 8H13q-5 1-5 7t5 6h9" fill="none" stroke="#fff" stroke-width="5"/></svg></button>
            <button class="app" aria-label="Snipping Tool"><svg viewBox="0 0 30 30"><ellipse cx="14" cy="9" rx="12" ry="6.500" transform="rotate(-20 14 9)" fill="#fff" stroke="#e34a4a" stroke-width="1.500"/><path d="M2 14q-4 7 14 5" fill="none" stroke="#e88"/><path d="M7 7l14 11M14 3l4 16" stroke="#888" stroke-width="2"/><ellipse cx="18" cy="24" rx="3" ry="5" fill="none" stroke="#1c86cf" stroke-width="2"/><ellipse cx="24" cy="19" rx="5" ry="3" transform="rotate(30 24 19)" fill="none" stroke="#1c86cf" stroke-width="2"/></svg></button>
            <button class="app stack" aria-label="Snip and Sketch"><svg viewBox="0 0 30 30"><path d="M12 2Q1 2 5 16M14 2q14 0 12 12-1 6-6 7" fill="none" stroke="#cf3b0a" stroke-width="4"/><path d="M11 2l4 16 3 4zM22 4l-9 15 3 2z" fill="#ddd" stroke="#999"/><circle cx="5" cy="22" r="3" fill="none" stroke="#0c5fb3" stroke-width="2"/><circle cx="16" cy="26" r="3" fill="none" stroke="#2196e0" stroke-width="2"/></svg></button>
        </div>
        <div class="tray">
            <button aria-label="Show hidden icons"><svg width="18" height="10" viewBox="0 0 18 10"><path d="M1 9l8-8 8 8"/></svg></button>
            <button aria-label="Volume"><svg width="21" height="18" viewBox="0 0 21 18"><path d="M1 6h3l4-4v14l-4-4H1zM11 7q1 2 0 4M14 4q4 5 0 10M17 1q6 8 0 16"/></svg></button>
            <button aria-label="Battery"><svg width="21" height="14" viewBox="0 0 21 14"><path d="M6 2.500h12v10H5V9M19.500 6v3M1 4h5v3H1zM2 1v3M5 1v3M3.500 7v5h2"/></svg></button>
            <button aria-label="Network"><svg width="16" height="16" viewBox="0 0 16 16"><path d="M1 15Q1 1 15 1" stroke="#999"/><path d="M4.500 15Q5 5 15 4.500M8 15q0-6 7-7M11 15q1-4 4-4"/><circle cx="14" cy="14" r="1.500" fill="#000" stroke="none"/></svg></button>
            <div class="lang"><span>ENG</span><span>US</span></div>
            <div class="clock"><span>4:18 PM</span><span>5/27/2021</span></div>
            <button class="notes" aria-label="Notifications"><svg width="21" height="19" viewBox="0 0 21 19"><path d="M0 0h20v16h-9l-3 3v-3H0z" fill="#000" stroke="none"/><path d="M4 4.500h12M4 8.500h12M4 12.500h8" stroke="#fff"/></svg><span>4</span></button>
        </div>
    </footer>
</body>
</html>
```
FILE: styles.css
```css
* {
    box-sizing: border-box;
}

body {
    margin: 0;
    height: 100vh;
    display: flex;
    flex-direction: column;
    font-family: "Liberation Sans", Arial, sans-serif;
    font-size: 13px;
    color: #444;
    overflow: hidden;
}

button {
    display: flex;
    align-items: center;
    justify-content: center;
    padding: 0;
    border: none;
    background: none;
    font: inherit;
    color: inherit;
    cursor: pointer;
}

a {
    color: inherit;
    text-decoration: none;
}

h2, p, ul {
    margin: 0;
    padding: 0;
}

h2 {
    font-weight: normal;
}

svg {
    flex: none;
}

svg:not([fill]) {
    fill: currentColor;
}

.sprite {
    display: none;
}

.caret {
    width: 8px;
    height: 6px;
}

/* Window frame */
.window {
    flex: 1;
    min-height: 0;
    display: flex;
    flex-direction: column;
    border-left: 1px solid #9b9b9b;
    padding-right: 4px;
    background: linear-gradient(#d2d2d2 90px, #929292 90px);
}

.titlebar {
    height: 39px;
    padding: 0 1px 0 10px;
    display: flex;
    align-items: center;
    gap: 5px;
    background: linear-gradient(90deg, #9b9b9b 808px, #02b3c4 808px 868px, #e4e4e4 868px 1109px, #9b9b9b 1109px) top / 100% 1px no-repeat #fff;
    font-family: "Open Sans", "Noto Sans", sans-serif;
    font-size: 14px;
    color: #888;
}

.logo {
    width: 20px;
    height: 20px;
}

.window-buttons {
    margin-left: auto;
    display: flex;
}

.window-buttons button {
    width: 58px;
    height: 38px;
}

.window-buttons svg {
    width: 12px;
    height: 12px;
    fill: none;
    stroke: #777;
}

.workspace {
    flex: 1;
    min-height: 0;
    display: flex;
}

/* Data panel */
.data-panel {
    width: 503px;
    flex: none;
    background: #e7e7e7;
    border-right: 2px solid #aaa;
    color: #666;
}

.data-header {
    height: 40px;
    padding: 0 12px 0 10px;
    background: #cbcbcb;
    display: flex;
    align-items: center;
    gap: 21px;
}

.team {
    gap: 10px;
    margin-right: auto;
    font-size: 17px;
}

.team svg:last-child {
    margin-left: 4px;
}

.data-body {
    padding: 16px 46px 0 20px;
    font-size: 15px;
}

.segments {
    display: flex;
    height: 35px;
    border: 1px solid #999;
    border-radius: 4px;
    overflow: hidden;
}

.segments button {
    flex: 1;
}

.segments .active {
    background: #fbfbfb;
    border-right: 1px solid #999;
}

.data-actions {
    display: flex;
    justify-content: flex-end;
    align-items: center;
    gap: 8px;
    margin: 11px 2px 0 0;
}

.data-actions button {
    height: 35px;
    border-radius: 4px;
}

.data-actions .upload {
    width: 76px;
    background: #6797cb;
    color: #fff;
    font-weight: bold;
}

.data-actions .new-folder {
    width: 104px;
    border: 1px solid #999;
    margin-right: 2px;
}

.crumbs {
    display: flex;
    align-items: center;
    gap: 9px;
    height: 32px;
    margin: 14px 2px 7px 1px;
    font-weight: bold;
}

.crumbs a {
    display: flex;
}

.crumbs button {
    margin-left: auto;
}

.folder-card {
    display: flex;
    height: 85px;
    background: #fdfdfd;
    border-radius: 3px;
    font-size: 16px;
    font-weight: bold;
}

.thumb {
    width: 86px;
    display: flex;
    align-items: center;
    justify-content: center;
    background: #ededed;
    color: #999;
}

.name {
    padding: 7px;
}

/* Application bar */
.editor {
    flex: 1;
    min-width: 0;
    display: flex;
    flex-direction: column;
    background: #f1f1f1;
}

.appbar {
    height: 40px;
    display: flex;
    align-items: flex-end;
    background: #cbcbcb;
    color: #666;
}

.quick {
    height: 40px;
    width: 241px;
    padding: 0 8px 0 10px;
    display: flex;
    align-items: center;
    justify-content: space-between;
}

.quick button {
    gap: 8px;
}

.muted {
    color: #999;
}

.doc-tab {
    flex: 1;
    height: 35px;
    padding-right: 8px;
    display: flex;
    align-items: center;
    background: #f1f1f1;
    border-radius: 5px 5px 0 0;
}

.doc-title {
    flex: 1;
    display: flex;
    align-items: center;
    justify-content: center;
    gap: 5px;
    font-size: 15px;
    color: #444;
}

.new-tab {
    width: 36px;
    height: 35px;
    margin-left: 5px;
    background: #bbb;
    border-radius: 5px 5px 0 0;
}

.account {
    height: 40px;
    width: 287px;
    padding: 0 14px;
    display: flex;
    align-items: center;
    justify-content: space-between;
}

.jobs {
    gap: 4px;
    margin-right: 10px;
    font-size: 14px;
}

.help {
    width: 20px;
    height: 20px;
    border-radius: 50%;
    background: #666;
    color: #ccc;
    font-size: 17px;
    font-weight: bold;
}

.avatar {
    width: 31px;
    height: 31px;
    border-radius: 50%;
    background: #ececec;
    font-size: 12px;
    color: #444;
}

/* Ribbon */
.ribbon {
    height: 102px;
    display: flex;
    border-bottom: 1px solid #ddd;
    font-size: 12px;
    color: #333;
}

.workspace-switch {
    width: 138px;
    height: 77px;
    margin: 12px 4px 0 14px;
    border: 2px solid #dfdfdf;
    border-radius: 5px;
    gap: 7px;
    font-weight: bold;
}

.ribbon-main {
    flex: 1;
}

.ribbon-tabs {
    display: flex;
    gap: 30px;
    padding-left: 16px;
}

.ribbon-tabs a {
    height: 30px;
    padding: 0 16px;
    line-height: 28px;
    border-bottom: 4px solid transparent;
}

.ribbon-tabs .active {
    color: #1a9fdc;
    border-color: #0896dc;
}

.ribbon-groups {
    display: flex;
}

.ribbon-groups section {
    padding: 0 9px;
    display: flex;
    flex-direction: column;
    align-items: center;
    border-right: 1px solid #d8d8d8;
    height: 67px;
}

.ribbon-groups section:last-child {
    border: none;
}

.ribbon-groups .wide {
    width: 124px;
}

.ribbon-groups .middle {
    width: 99px;
}

.ribbon-groups .narrow {
    width: 93px;
}

.tools {
    display: flex;
    gap: 6px;
}

.tools button,
.tools svg {
    width: 48px;
    height: 48px;
}

.tools .active {
    background: #0896dc;
}

.menu {
    gap: 4px;
    height: 24px;
    flex: none;
}

/* Update banner */
.banner {
    height: 40px;
    display: flex;
    align-items: center;
    padding-right: 20px;
    background: #ffc26d;
    color: #fff;
    font-size: 16px;
    font-weight: bold;
}

.banner p {
    flex: 1;
    text-align: center;
    white-space: nowrap;
}

/* Canvas */
.canvas {
    position: relative;
    flex: 1;
    min-height: 0;
    overflow: hidden;
    background: #fff;
}

.scene,
.ink {
    position: absolute;
    inset: 0;
    width: 100%;
    height: 100%;
}

.ink {
    stroke: #000;
    stroke-width: 4;
    stroke-linecap: round;
    pointer-events: none;
    z-index: 2;
}

.dim-text {
    font-size: 18px;
    fill: #1c4a8c;
}

.cube-text {
    font-size: 9px;
    fill: #888;
}

.axis-z {
    font-size: 13px;
    fill: #7878f8;
}

.axis-x {
    font-size: 13px;
    fill: #f77;
}

.dock {
    position: absolute;
    left: 5px;
    width: 375px;
    height: 31px;
    padding: 0 1px 0 30px;
    display: flex;
    align-items: center;
    background: #f1f1f1;
    border: 1px solid #c8c8c8;
    color: #333;
}

.dock h2 {
    flex: 1;
    font-size: 13px;
    color: #777;
}

.browser-head {
    top: 5px;
    padding-left: 6px;
    gap: 12px;
}

.browser-head .dot {
    margin-right: -3px;
}

.dot,
.dot svg {
    width: 12px;
    height: 12px;
    color: #222;
}

.grip {
    width: 4px;
    height: 14px;
    border: solid #999;
    border-width: 0 1px;
}

.comments {
    bottom: 5px;
    border-top: none;
}

.comments .grip {
    margin-left: 9px;
}

.tree {
    position: absolute;
    top: 43px;
    left: 26px;
    display: flex;
    flex-direction: column;
    gap: 5px;
    list-style: none;
    color: #444;
}

.tree li {
    display: flex;
    align-items: center;
    gap: 11px;
    padding-left: 24px;
}

.tree .root {
    padding-left: 0;
    gap: 10px;
}

.node {
    height: 25px;
    padding: 0 14px 0 3px;
    display: flex;
    align-items: center;
    background: #f1f1f1;
}

.root .node {
    gap: 8px;
    padding: 0 9px 0 4px;
}

.expand {
    width: 12px;
    height: 17px;
}

.eye {
    width: 20px;
    height: 14px;
    color: #999;
}

.eye.off {
    color: #ddd;
}

.ico {
    width: 20px;
    height: 16px;
    margin-right: 18px;
    color: #999;
}

.ico.gear {
    height: 20px;
}

.eye + .ico {
    margin-left: 11px;
}

.selected {
    height: 20px;
    padding: 0 14px 0 3px;
    display: flex;
    align-items: center;
    gap: 20px;
    background: #999;
    color: #fff;
    font-weight: bold;
}

.root input {
    appearance: none;
    width: 16px;
    height: 16px;
    margin: 0 0 0 -3px;
    border: 1px solid #333;
    border-radius: 50%;
    background: radial-gradient(#333 3px, #fff 4px);
}

/* Dashed underline marks a folder with sketches that are not fully constrained */
.sketches {
    background: repeating-linear-gradient(120deg, #7c93bb 0 3px, #f1f1f1 3px 7px) 31px 20px / 110px 4px no-repeat #f1f1f1;
}

.float-input {
    position: absolute;
    top: 404px;
    left: 855px;
    height: 28px;
    padding-right: 12px;
    display: flex;
    align-items: center;
    gap: 13px;
    background: #f1f1f1;
    color: #888;
}

.handle {
    width: 4px;
    height: 24px;
    margin: 0 -13px 0 10px;
    border-right: 2px solid #ddd;
}

.field {
    position: relative;
    margin-left: 4px;
}

.field input {
    width: 86px;
    height: 25px;
    padding: 0 6px 0 0;
    border: 1px solid #ccc;
    text-align: center;
    font: inherit;
    color: #444;
}

.cursor {
    position: absolute;
    left: 34px;
    top: 4px;
    width: 1px;
    height: 17px;
    background: #000;
}

/* Extrude dialog */
.extrude {
    position: absolute;
    top: 133px;
    right: 4px;
    width: 313px;
    background: #f1f1f1;
    border: 1px solid #c8c8c8;
}

.extrude-head {
    height: 30px;
    padding: 0 6px 0 1px;
    display: flex;
    align-items: center;
    gap: 4px;
    border-bottom: 1px solid #c8c8c8;
    color: #222;
}

.extrude-head .dot {
    margin-left: 5px;
}

.extrude-head h2 {
    flex: 1;
    font-size: 13px;
    color: #666;
}

.extrude-body {
    padding: 2px 15px 4px;
    display: flex;
    flex-direction: column;
    gap: 4px;
}

.row {
    display: grid;
    grid-template-columns: 91px 165px;
    align-items: center;
}

.types {
    display: flex;
    gap: 5px;
}

.types button {
    height: 34px;
    min-width: 29px;
}

.types .on {
    background: #0896dc;
    color: #fff;
}

.types .picked {
    width: 98px;
    gap: 6px;
}

.pick {
    height: 33px;
    padding: 0 6px 0 3px;
    display: flex;
    align-items: center;
    gap: 5px;
    border: 1px solid #ddd;
    background: #fff;
}

.pick select {
    flex: 1;
    appearance: none;
    border: none;
    background: none;
    font: inherit;
    color: inherit;
}

.row > input {
    height: 34px;
    padding: 0 2px;
    border: 1px solid #ccc;
    font: inherit;
    color: inherit;
}

hr {
    width: 294px;
    height: 4px;
    margin: 3px 0 1px -13px;
    border: none;
    background: #c4c4c4;
}

.extrude-foot {
    height: 45px;
    padding: 0 13px 0 10px;
    display: flex;
    align-items: center;
    gap: 13px;
    border-top: 1px solid #bbb;
    color: #000;
}

.extrude-foot svg {
    margin-right: auto;
}

.extrude-foot button {
    width: 75px;
    height: 24px;
    border: 1px solid #bbb;
    background: #e8e8e8;
    font-size: 15px;
    color: #777;
}

.nav-bar {
    position: absolute;
    left: 50%;
    bottom: 5px;
    transform: translateX(-50%);
    width: 296px;
    height: 30px;
    padding-left: 4px;
    display: flex;
    align-items: center;
    gap: 8px;
    background: #f1f1f1;
}

.nav-bar button {
    gap: 3px;
    color: #333;
}

.nav-bar button:first-child,
.nav-bar .single + button:not(.single) {
    gap: 6px;
}

.nav-bar .single + button {
    margin-left: 4px;
}

.status {
    position: absolute;
    right: 18px;
    bottom: 13px;
    font-size: 14px;
    font-weight: bold;
}

.timeline {
    height: 55px;
    padding: 9px 16px 0 13px;
    display: flex;
    align-items: center;
    gap: 15px;
    border-top: 2px solid #ccc;
    color: #555;
}

.feature {
    margin-left: 9px;
    align-self: flex-end;
}

.timeline-settings {
    margin-left: auto;
}

/* Taskbar */
.taskbar {
    height: 50px;
    flex: none;
    display: flex;
    background: linear-gradient(90deg, #e4d3e8, #e8d4e8 45%, #e3d2d5 65%, #ead6d7);
    font-family: "Open Sans", "Noto Sans", sans-serif;
    font-size: 14px;
    color: #000;
}

.start,
.sys {
    width: 60px;
}

.search {
    width: 430px;
    padding-left: 14px;
    display: flex;
    align-items: center;
    gap: 12px;
    border: 1px solid #c8c8c8;
    background: #fff;
}

.search input {
    flex: 1;
    border: none;
    font: inherit;
    font-size: 18px;
}

.search input::placeholder {
    color: #222;
}

.apps {
    display: flex;
    margin-left: 3px;
}

.app {
    position: relative;
    width: 62px;
    background: linear-gradient(#02b3c4, #02b3c4) center bottom / 51px 3px no-repeat;
}

.app.stack {
    background-image: linear-gradient(90deg, #02b3c4 41px, #66cdd6 41px);
}

.app.current {
    background-color: #f4eeee;
    background-size: 100% 3px;
}

.app svg {
    width: 30px;
    height: 30px;
}

.glyph {
    font: bold 12px "Open Sans", sans-serif;
    text-anchor: middle;
    fill: #fff;
}

.tiny {
    font: bold 6px "Open Sans", sans-serif;
    text-anchor: middle;
    fill: #d97a22;
}

.badge {
    position: absolute;
    right: 14px;
    bottom: 8px;
    width: 20px;
    height: 20px;
    border-radius: 50%;
    background: #f00;
    color: #fff;
    font: 13px/20px "Liberation Sans", sans-serif;
}

.tray {
    margin-left: auto;
    padding-right: 25px;
    display: flex;
    align-items: center;
    gap: 10px;
    border-right: 6px solid #ead6d7;
}

.tray svg {
    fill: none;
    stroke: #000;
}

.lang,
.clock {
    display: flex;
    flex-direction: column;
    align-items: center;
    line-height: 23px;
    margin-left: 5px;
}

.clock {
    margin-left: 7px;
}

.notes {
    position: relative;
    margin-left: 14px;
}

.notes span {
    position: absolute;
    right: -10px;
    bottom: -12px;
    width: 21px;
    height: 21px;
    border: 1px solid #888;
    border-radius: 50%;
    background: #d3cccc;
    line-height: 18px;
}
```
